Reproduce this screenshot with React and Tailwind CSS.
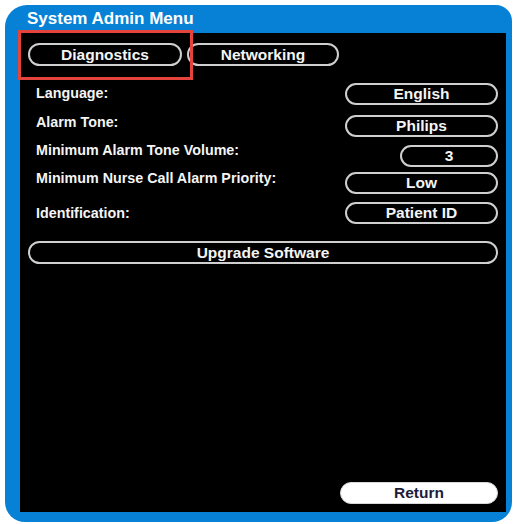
// System admin settings screen for the bedside monitor
const settings = [
  { label: "Language:", value: "English", width: "w-[153px]", top: "mt-[17px]", nudge: "mt-[2px]" },
  { label: "Alarm Tone:", value: "Philips", width: "w-[153px]", top: "mt-[10px]", nudge: "mt-[-1px]" },
  { label: "Minimum Alarm Tone Volume:", value: "3", width: "w-[98px]", top: "mt-[8px]", nudge: "mt-[-3px]" },
  { label: "Minimum Nurse Call Alarm Priority:", value: "Low", width: "w-[153px]", top: "mt-[5px]", nudge: "mt-[-2px]" },
  { label: "Identification:", value: "Patient ID", width: "w-[153px]", top: "mt-[8px]", nudge: "mt-[3px]" },
];

const PillButton = ({ children, className = "" }) => (
  <button
    type="button"
    className={`h-[22px] rounded-full border-2 border-[#cfcfcf] bg-black text-[15.5px] font-bold leading-none text-[#f4f4f4] flex items-center justify-center ${className}`}
  >
    {children}
  </button>
);

export default function App() {
  return (
    <div
      className="relative w-[513px] h-[524px] bg-white pt-[5px] pl-[5px]"
      style={{ fontFamily: '"Liberation Sans", Arial, sans-serif' }}
    >
      {/* blue frame */}
      <div className="w-[507px] h-[517px] bg-[#0681d5] rounded-tl-[22px] rounded-tr-[16px] rounded-b-[20px] flex flex-col pl-[15px] pr-[6px] pb-[10px]">
        <div className="h-[28px] flex items-center pl-[7px] text-[17px] font-bold text-white">
          System Admin Menu
        </div>

        {/* menu body */}
        <div className="flex-1 bg-black flex flex-col">
          {/* tabs */}
          <div className="flex gap-[5px] pl-[8px] pt-[10px]">
            <PillButton className="w-[154px] h-[23px]">Diagnostics</PillButton>
            <PillButton className="w-[152px] h-[23px]">Networking</PillButton>
          </div>

          {/* setting rows */}
          {settings.map((row) => (
            <div key={row.label} className={`flex items-start justify-between pl-[16px] pr-[8px] ${row.top}`}>
              <span className={`text-[14.3px] font-bold leading-[16px] text-[#f4f4f4] ${row.nudge}`}>
                {row.label}
              </span>
              <PillButton className={row.width}>{row.value}</PillButton>
            </div>
          ))}

          <div className="px-[8px] mt-[17px]">
            <PillButton className="w-full h-[23px]">Upgrade Software</PillButton>
          </div>

          {/* return */}
          <div className="mt-auto flex justify-end pr-[8px] pb-[8px]">
            <button
              type="button"
              className="w-[158px] h-[22px] rounded-full bg-white border border-[#d8d8d8] text-[15.5px] font-bold leading-none text-[#1c1c3a] flex items-center justify-center"
            >
              Return
            </button>
          </div>
        </div>
      </div>

      {/* highlight around the diagnostics tab */}
      <div className="absolute left-[18px] top-[30px] w-[175px] h-[50px] border-[3px] border-[#e4443c]" />
    </div>
  );
}
